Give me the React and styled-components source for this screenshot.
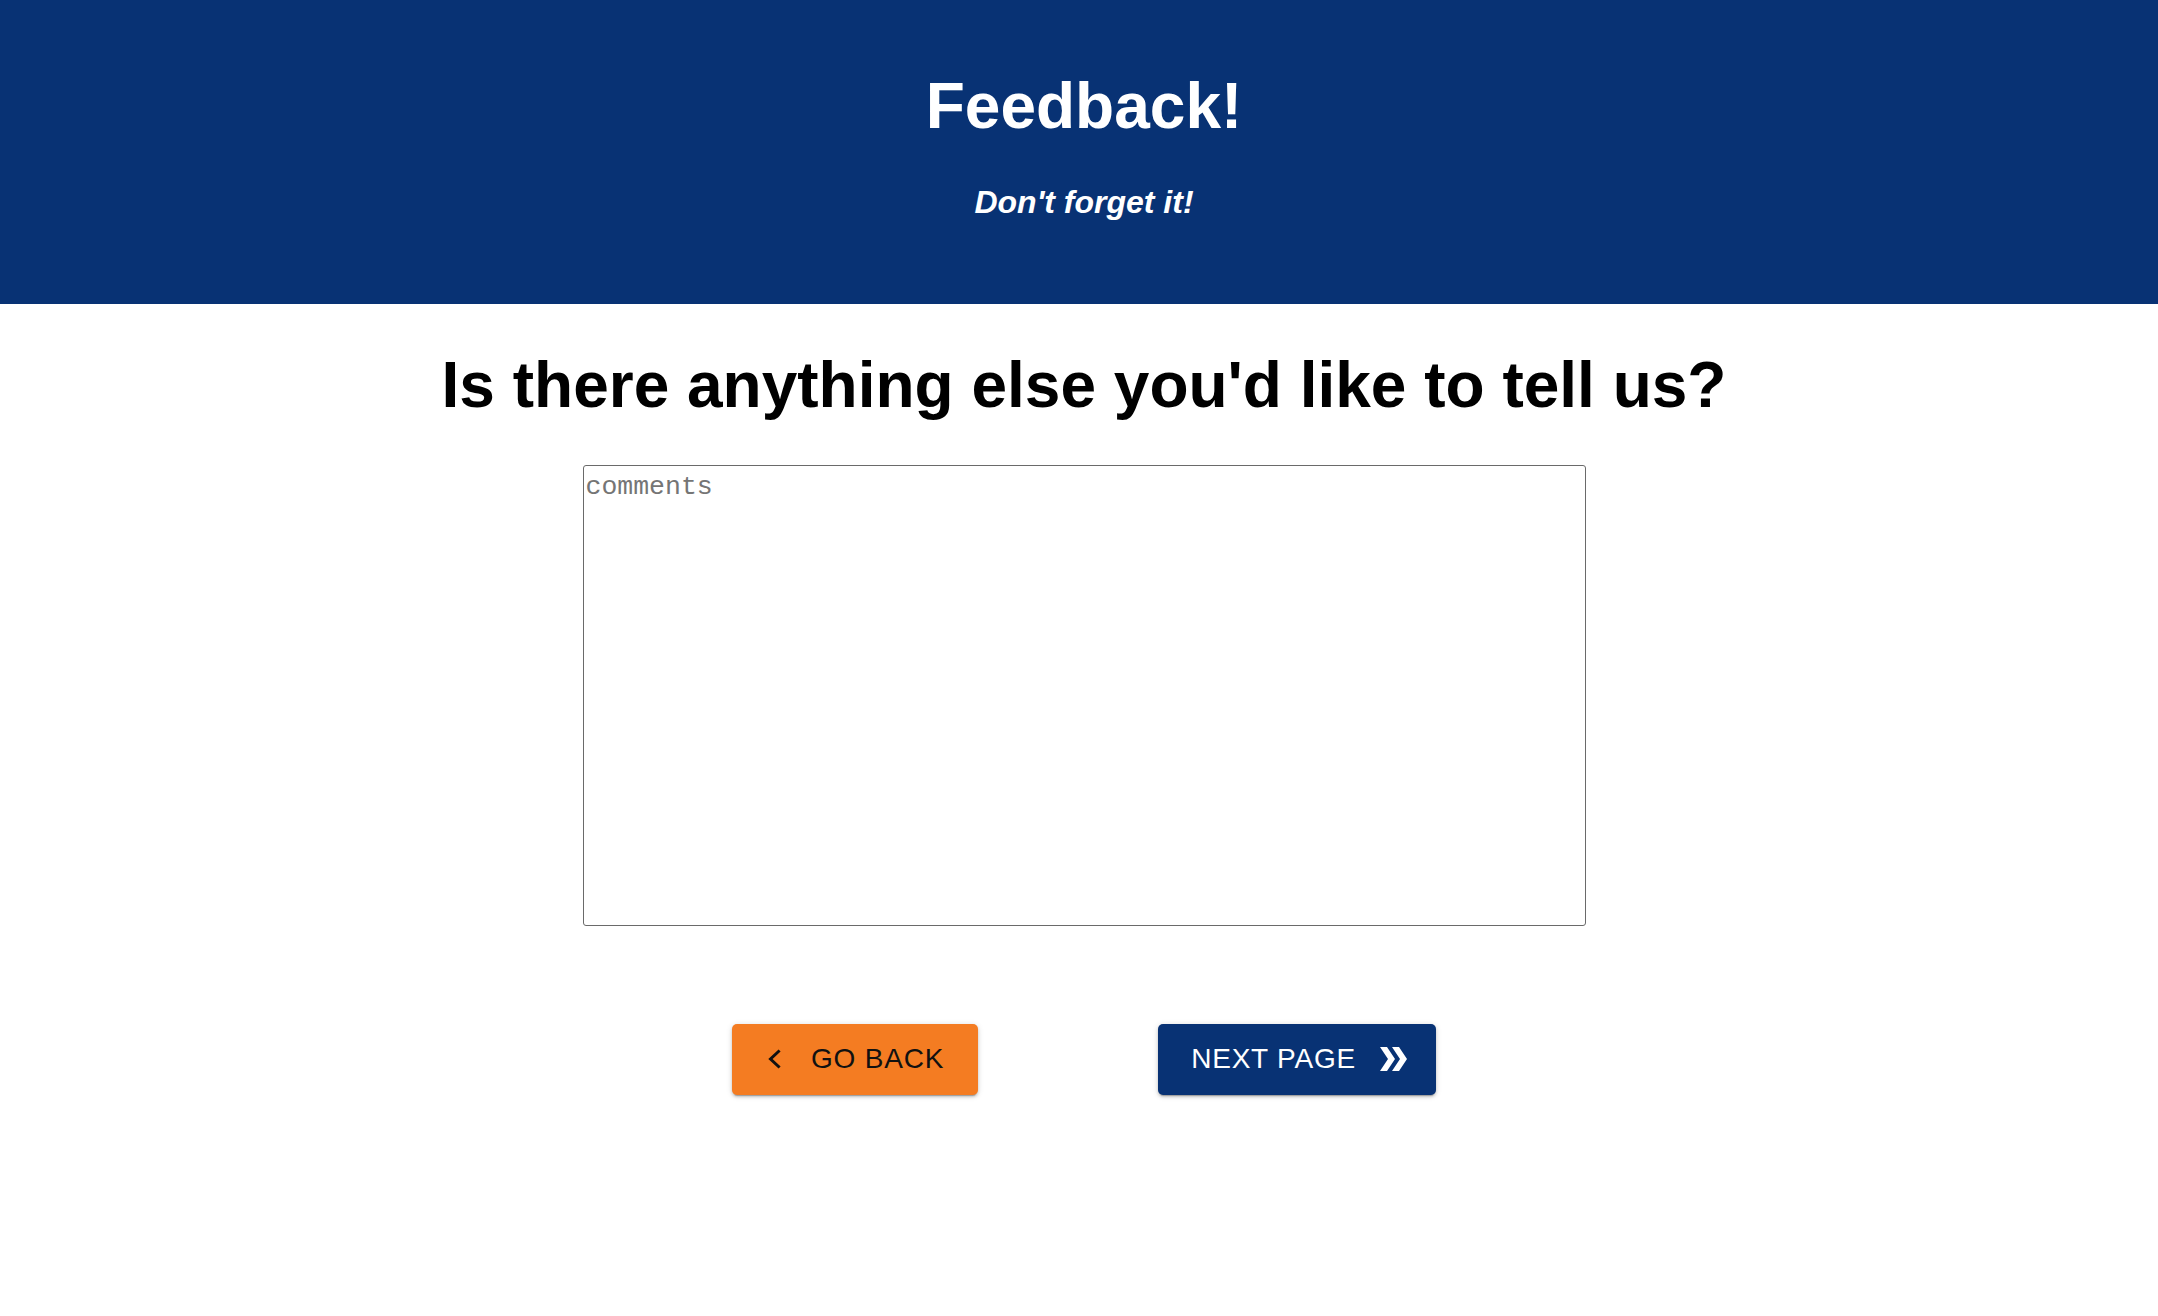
import styled, { createGlobalStyle } from 'styled-components';

const GlobalStyle = createGlobalStyle`
  html, body {
    margin: 0;
    padding: 0;
    background: #ffffff;
    font-family: 'Liberation Sans', Arial, Helvetica, sans-serif;
  }
`;

const colors = {
  navy: '#083274',
  orange: '#f47c22',
  ink: '#111111',
  white: '#ffffff',
};

const Header = styled.header`
  background-color: ${colors.navy};
  color: ${colors.white};
  height: 304px;
  box-sizing: border-box;
  padding: 70px 0 0 10px;
  display: flex;
  flex-direction: column;
  align-items: center;
`;

const Title = styled.h1`
  margin: 0;
  font-size: 64px;
  line-height: 1.15;
  font-weight: 700;
`;

const Subtitle = styled.p`
  margin: 40px 0 0;
  font-size: 32px;
  line-height: 1.15;
  font-weight: 700;
  font-style: italic;
`;

const Main = styled.main`
  display: flex;
  flex-direction: column;
  align-items: center;
  padding: 45px 0 80px 10px;
`;

const Question = styled.h2`
  margin: 0;
  font-size: 64px;
  line-height: 1.15;
  font-weight: 700;
  color: #000000;
`;

const Comments = styled.textarea`
  margin-top: 42px;
  width: 1003px;
  height: 461px;
  box-sizing: border-box;
  padding: 6px 2px;
  border: 1px solid #6a6a6a;
  border-radius: 3px;
  font-family: 'Liberation Mono', 'Courier New', monospace;
  font-size: 26.5px;
  resize: none;
  outline: none;

  &::placeholder {
    color: #757575;
  }
`;

const Actions = styled.div`
  margin-top: 98px;
  display: flex;
  justify-content: center;
  gap: 180px;
`;

const NavButton = styled.button`
  display: inline-flex;
  align-items: center;
  height: 71px;
  box-sizing: border-box;
  padding: ${({ $variant }) => ($variant === 'back' ? '0 34px 0 30px' : '0 26px 0 33px')};
  gap: ${({ $variant }) => ($variant === 'back' ? '25px' : '22px')};
  border: none;
  border-radius: 5px;
  background-color: ${({ $variant }) => ($variant === 'back' ? colors.orange : colors.navy)};
  color: ${({ $variant }) => ($variant === 'back' ? colors.ink : colors.white)};
  font-family: 'Liberation Sans', Arial, sans-serif;
  font-size: 28px;
  font-weight: 400;
  letter-spacing: 0.8px;
  text-transform: uppercase;
  cursor: pointer;
  box-shadow: 0px 3px 1px -2px rgba(0, 0, 0, 0.22), 0px 2px 3px 0px rgba(0, 0, 0, 0.16),
    0px 1px 6px 0px rgba(0, 0, 0, 0.14);

  svg {
    flex-shrink: 0;
    display: block;
  }
`;

const BackIcon = () => (
  <svg width="24" height="24" viewBox="0 0 24 24" aria-hidden="true">
    <polyline
      points="16.5,4.5 8.5,12 16.5,19.5"
      fill="none"
      stroke="currentColor"
      strokeWidth="3"
      strokeLinecap="square"
      strokeLinejoin="miter"
    />
  </svg>
);

const DoubleChevron = () => (
  <svg width="32" height="28" viewBox="0 0 32 28" aria-hidden="true">
    <polygon points="2,2 9,2 17,14 9,26 2,26 10,14" fill="currentColor" />
    <polygon points="14,2 21,2 29,14 21,26 14,26 22,14" fill="currentColor" />
  </svg>
);

export default function App() {
  return (
    <>
      <GlobalStyle />
      <Header>
        <Title>Feedback!</Title>
        <Subtitle>Don't forget it!</Subtitle>
      </Header>
      <Main>
        <Question>Is there anything else you'd like to tell us?</Question>
        <Comments placeholder="comments" />
        <Actions>
          <NavButton $variant="back">
            <BackIcon />
            Go Back
          </NavButton>
          <NavButton $variant="next">
            Next Page
            <DoubleChevron />
          </NavButton>
        </Actions>
      </Main>
    </>
  );
}
